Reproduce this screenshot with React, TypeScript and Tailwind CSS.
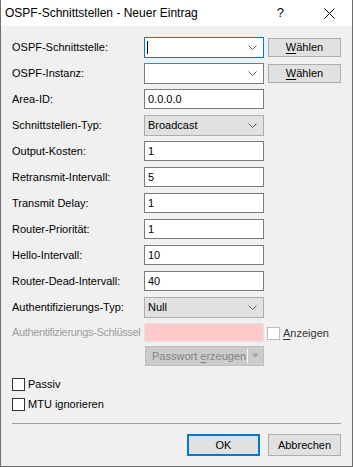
import React from 'react'

const font = { fontFamily: '"Liberation Sans", Arial, sans-serif' }

const Chevron = () => (
  <svg width="9" height="5" viewBox="0 0 9 5" className="shrink-0">
    <path d="M0.5 0.5 L4.5 4.5 L8.5 0.5" fill="none" stroke="#606060" strokeWidth="1" />
  </svg>
)

const Row = ({ label, h = 20, disabled = false, children, rowH = 26 }: { label: string; h?: number; disabled?: boolean; children: React.ReactNode; rowH?: number }) => (
  <div className="flex items-start" style={{ height: rowH }}>
    <div
      className={`flex w-[132px] items-center overflow-hidden whitespace-nowrap text-[11px] leading-none ${disabled ? 'tracking-[-0.35px] text-[#9d9d9d]' : 'text-black'}`}
      style={{ height: h }}
    >
      {label}
    </div>
    {children}
  </div>
)

const TextBox = ({ value }: { value: string }) => (
  <div className="flex h-[20px] w-[120px] items-center border border-[#7a7a7a] bg-white pl-[3px] text-[11px] leading-none text-black">{value}</div>
)

const SelectBox = ({ value }: { value: string }) => (
  <div className="flex h-[21px] w-[120px] items-center justify-between border border-[#adadad] bg-[#e1e1e1] pl-[3px] pr-[6px] text-[11px] leading-none text-black">
    <span>{value}</span>
    <Chevron />
  </div>
)

const Combo = ({ focused = false }: { focused?: boolean }) => (
  <div className={`flex h-[21px] w-[120px] items-center justify-between border bg-white pl-[2px] pr-[6px] ${focused ? 'border-[#0078d7]' : 'border-[#7a7a7a]'}`}>
    {focused ? <span className="h-[13px] w-px bg-black" /> : <span />}
    <Chevron />
  </div>
)

const WaehlenButton = () => (
  <div className="ml-[4px] mt-px flex h-[19px] w-[73px] items-center justify-center border border-[#adadad] bg-[#e1e1e1] text-[11px] leading-none text-black">
    <span className="underline underline-offset-2">W</span>ählen
  </div>
)

const CheckBox = ({ label }: { label: string }) => (
  <div className="flex h-[13px] items-center gap-[3px] text-[11px] leading-none text-black">
    <div className="h-[13px] w-[13px] border border-[#333333] bg-white" />
    <span>{label}</span>
  </div>
)

export default function App() {
  return (
    <div className="flex h-[467px] w-[353px] flex-col border-x border-b border-[#6e6e6e] bg-[#f0f0f0]" style={font}>
      <div className="flex h-[26px] shrink-0 items-center justify-between bg-white pl-[4px] text-[12px] text-black">
        <span>OSPF-Schnittstellen - Neuer Eintrag</span>
        <div className="flex items-center">
          <span className="mr-[40px] text-[13px]">?</span>
          <svg width="11" height="11" viewBox="0 0 11 11" className="mr-[17px]">
            <path d="M0.5 0.5 L10.5 10.5 M10.5 0.5 L0.5 10.5" stroke="#000" strokeWidth="1" />
          </svg>
        </div>
      </div>

      <div className="flex flex-col pl-[11px] pt-[11px]">
        <Row label="OSPF-Schnittstelle:" h={21}>
          <Combo focused />
          <WaehlenButton />
        </Row>
        <Row label="OSPF-Instanz:" h={21}>
          <Combo />
          <WaehlenButton />
        </Row>
        <Row label="Area-ID:">
          <TextBox value="0.0.0.0" />
        </Row>
        <Row label="Schnittstellen-Typ:" h={21}>
          <SelectBox value="Broadcast" />
        </Row>
        <Row label="Output-Kosten:">
          <TextBox value="1" />
        </Row>
        <Row label="Retransmit-Intervall:">
          <TextBox value="5" />
        </Row>
        <Row label="Transmit Delay:">
          <TextBox value="1" />
        </Row>
        <Row label="Router-Priorität:">
          <TextBox value="1" />
        </Row>
        <Row label="Hello-Intervall:">
          <TextBox value="10" />
        </Row>
        <Row label="Router-Dead-Intervall:">
          <TextBox value="40" />
        </Row>
        <Row label="Authentifizierungs-Typ:" h={21}>
          <SelectBox value="Null" />
        </Row>
        <Row label="Authentifizierungs-Schlüssel" h={19} rowH={23} disabled>
          <div className="h-[19px] w-[120px] border border-[#e3e3e3] bg-[#ffc9c9]" />
          <div className="ml-[3px] mt-[4px] flex h-[13px] items-center gap-[3px] text-[11px] leading-none text-[#333333]">
            <div className="h-[13px] w-[13px] border border-[#bcbcbc] bg-white" />
            <span>
              <span className="underline underline-offset-2">A</span>nzeigen
            </span>
          </div>
        </Row>
        <div className="ml-[133px] flex h-[20px] w-[119px] items-center border border-[#bfbfbf] bg-[#cccccc] text-[11px] leading-none text-[#838383]">
          <span className="flex-1 pl-[6px]">
            Passwort <span className="underline underline-offset-2">e</span>rzeugen
          </span>
          <div className="h-[14px] w-px bg-[#f4f4f4]" />
          <svg width="13" height="6" viewBox="0 0 13 6" className="mx-[1px]">
            <path d="M3 0.5 L10 0.5 L6.5 5 Z" fill="#a3a3a3" />
          </svg>
        </div>

        <div className="mt-[12px] flex flex-col gap-[7px]">
          <CheckBox label="Passiv" />
          <CheckBox label="MTU ignorieren" />
        </div>
      </div>

      <div className="mx-[11px] mt-[12px] h-px bg-[#a0a0a0]" />

      <div className="mt-[10px] flex justify-end gap-[8px] pr-[11px]">
        <div className="flex h-[22px] w-[73px] items-center justify-center border-2 border-[#0078d7] bg-[#e1e1e1] text-[11px] leading-none text-black">OK</div>
        <div className="flex h-[22px] w-[73px] items-center justify-center border border-[#adadad] bg-[#e1e1e1] text-[11px] leading-none text-black">Abbrechen</div>
      </div>
    </div>
  )
}
